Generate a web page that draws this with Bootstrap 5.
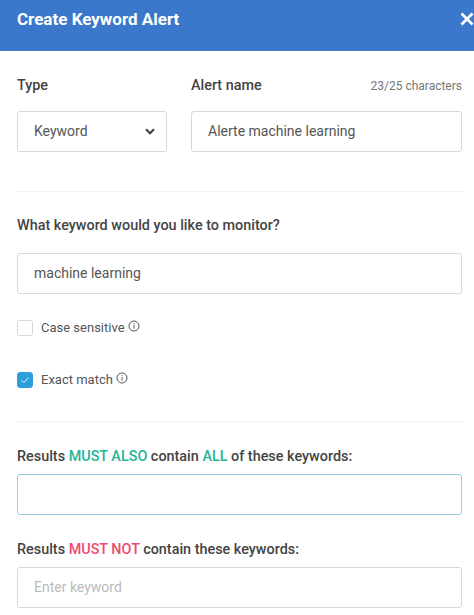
<!DOCTYPE html>
<html lang="en">
<head>
  <meta charset="UTF-8">
  <meta name="viewport" content="width=device-width, initial-scale=1.0">
  <title>Create Keyword Alert</title>
  <link href="https://cdn.jsdelivr.net/npm/bootstrap@5.3.0/dist/css/bootstrap.min.css" rel="stylesheet">
  <script src="https://cdn.jsdelivr.net/npm/bootstrap@5.3.0/dist/js/bootstrap.bundle.min.js"></script>
  <style>
    html, body { height: 615px; overflow: hidden; }
    body { font-family: Roboto, "Liberation Sans", sans-serif; font-size: 14px; color: #444; background: #fff; }
    .alert-head { height: 51px; background: #3b78cb; color: #fff; padding: 10px 0 0 17px; overflow: hidden; }
    .alert-head h1 { font-size: 17px; font-weight: 700; line-height: 19px; margin: 0; }
    .close-x { width: 14px; height: 14px; margin-top: 2px; flex: none; }
    .alert-body { padding: 0 12px 0 17px; }
    .field-label { font-size: 14.4px; font-weight: 500; line-height: 16px; color: #444; margin: 0; }
    .char-count { font-size: 12px; line-height: 16px; color: #777; }
    .form-control.kw-input, .form-select.kw-select {
      height: 41px; border: 1px solid #d8d8d8; border-radius: 3px; padding: 0 16px;
      font-size: 14px; color: #555; box-shadow: none;
    }
    .form-control.kw-input { padding-bottom: 2px; }
    .form-select.kw-select {
      background-image: url("data:image/svg+xml,%3Csvg xmlns='http://www.w3.org/2000/svg' viewBox='0 0 10 7'%3E%3Cpath d='M1 1.2l4 4 4-4' fill='none' stroke='%23444' stroke-width='2.2'/%3E%3C/svg%3E");
      background-size: 10px 7px; background-position: right 11px center;
    }
    .kw-input::placeholder { color: #bbb; opacity: 1; }
    .form-control.kw-input.kw-focus { border-color: #97cbe0; }
    .type-col { width: 150px; flex: none; }
    .sep { border: 0; border-top: 1px solid #f1f1f1; opacity: 1; margin: 0; }
    .tick-box { width: 16px; height: 16px; border: 1px solid #d8d8d8; border-radius: 3px; background: #fff; flex: none; display: flex; align-items: center; justify-content: center; margin-right: 8px; }
    .tick-box.on { background: #2a9fdc; border-color: #2a9fdc; }
    .tick-label { font-size: 13px; line-height: 16px; color: #555; margin-right: 3px; }
    .info-i { width: 12px; height: 12px; flex: none; margin-top: -4px; }
    .must-also { color: #1fb597; }
    .must-not { color: #ee4a6f; }
    .top-label { padding-top: 27px; margin-bottom: 17px; }
    .sep-a { margin-top: 39px; }
    .lbl-a { margin-top: 26px; margin-bottom: 19px; }
    .check-a { margin-top: 26px; }
    .check-b { margin-top: 36px; }
    .sep-b { margin-top: 33px; }
    .lbl-b { margin-top: 27px; margin-bottom: 9px; }
    .lbl-c { margin-top: 27px; margin-bottom: 9px; }
  </style>
</head>
<body>

<!-- Header -->
<div class="alert-head d-flex justify-content-between">
  <h1>Create Keyword Alert</h1>
  <svg class="close-x" viewBox="0 0 14 14"><path d="M1.5 1.5l11 11M12.5 1.5l-11 11" stroke="#fff" stroke-width="2.6" fill="none"/></svg>
</div>

<div class="alert-body">
  <!-- Type and name -->
  <div class="d-flex gap-4 align-items-start">
    <div class="type-col">
      <div class="field-label top-label">Type</div>
      <select class="form-select kw-select"><option>Keyword</option></select>
    </div>
    <div class="flex-grow-1">
      <div class="d-flex justify-content-between top-label">
        <span class="field-label">Alert name</span>
        <span class="char-count">23/25 characters</span>
      </div>
      <input type="text" class="form-control kw-input" value="Alerte machine learning">
    </div>
  </div>

  <hr class="sep sep-a">

  <div class="field-label lbl-a">What keyword would you like to monitor?</div>
  <input type="text" class="form-control kw-input" value="machine learning">

  <div class="d-flex align-items-center check-a">
    <span class="tick-box"></span>
    <span class="tick-label">Case sensitive</span>
    <svg class="info-i" viewBox="0 0 12 12"><circle cx="6" cy="6" r="5" fill="none" stroke="#555"/><path d="M6 5.2v3.4M6 3.2v1" stroke="#555" fill="none"/></svg>
  </div>
  <div class="d-flex align-items-center check-b">
    <span class="tick-box on"><svg width="10" height="10" viewBox="0 0 10 10"><path d="M1.5 5.2l2.4 2.4 4.6-5" fill="none" stroke="#fff" stroke-width="0.9"/></svg></span>
    <span class="tick-label">Exact match</span>
    <svg class="info-i" viewBox="0 0 12 12"><circle cx="6" cy="6" r="5" fill="none" stroke="#555"/><path d="M6 5.2v3.4M6 3.2v1" stroke="#555" fill="none"/></svg>
  </div>

  <hr class="sep sep-b">

  <div class="field-label lbl-b">Results <span class="must-also">MUST ALSO</span> contain <span class="must-also">ALL</span> of these keywords:</div>
  <input type="text" class="form-control kw-input kw-focus">

  <div class="field-label lbl-c">Results <span class="must-not">MUST NOT</span> contain these keywords:</div>
  <input type="text" class="form-control kw-input" placeholder="Enter keyword">
</div>

</body>
</html>
